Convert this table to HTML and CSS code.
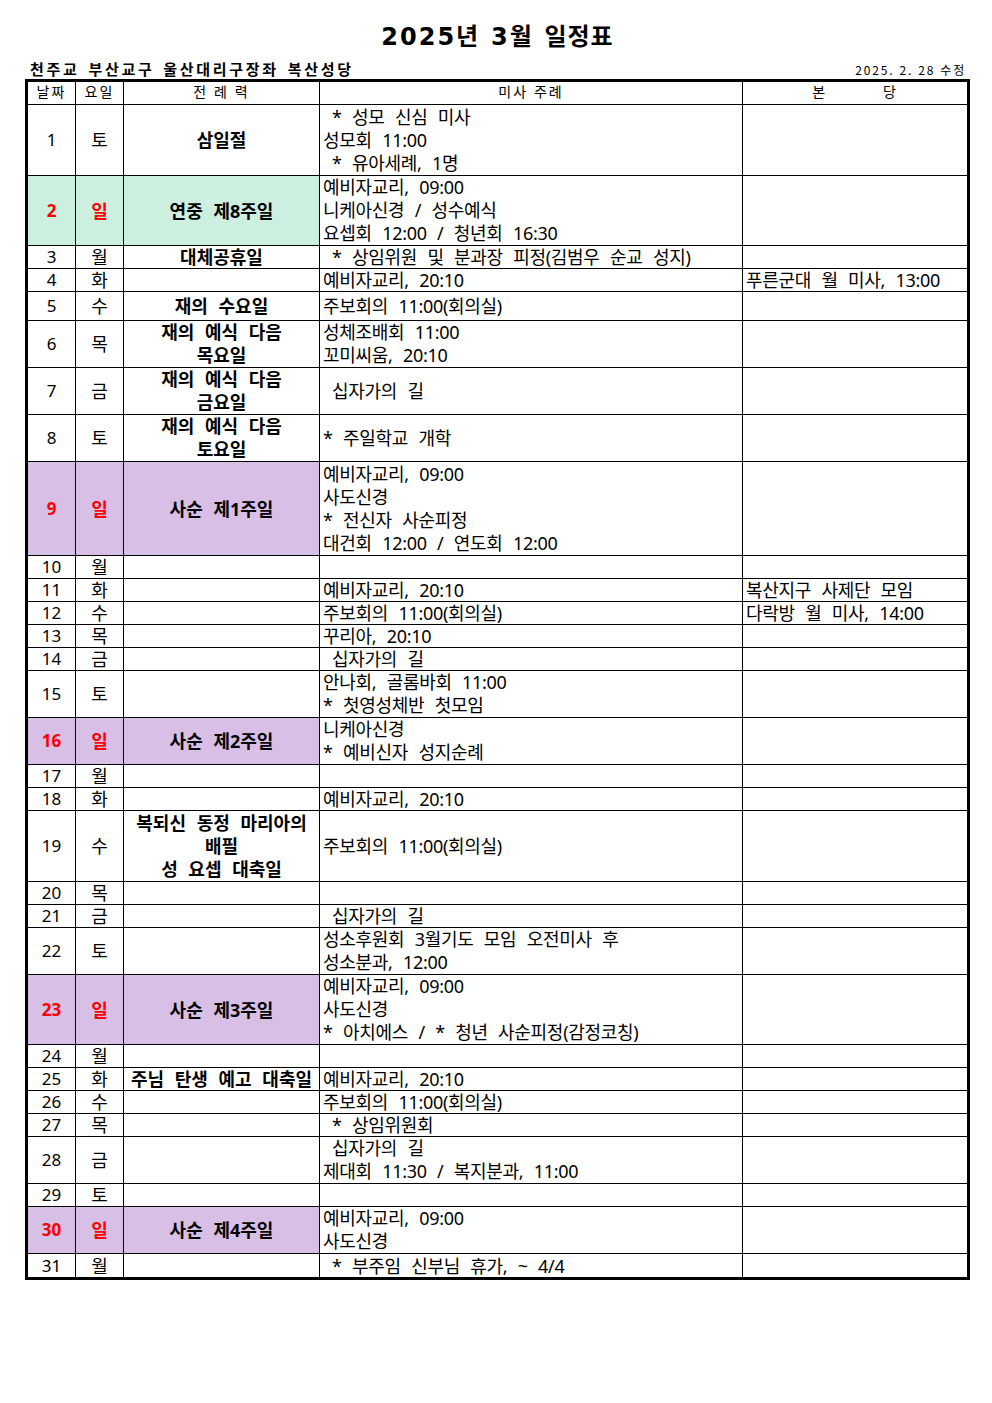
FILE: index.html
```html
<!DOCTYPE html>
<html lang="ko">
<head>
<meta charset="utf-8">
<title>2025년 3월 일정표</title>
<link rel="stylesheet" href="styles.css">
</head>
<body>
<div class="page">
  <h1 class="title"><span class="num">2025</span>년 <span class="num">3</span>월 일정표</h1>
  <div class="subhead">
    <span class="parish">천주교 부산교구 울산대리구장좌 복산성당</span>
    <span class="revised">2025. 2. 28 수정</span>
  </div>
  <table class="sched">
    <colgroup>
      <col class="w-date"><col class="w-day"><col class="w-lit"><col class="w-mass"><col class="w-par">
    </colgroup>
    <thead>
      <tr class="head">
        <th>날짜</th><th>요일</th><th class="sp">전 례 력</th><th class="sp">미사 주례</th><th class="bd">본 당</th>
      </tr>
    </thead>
    <tbody>
      <tr class="h3"><td class="d">1</td><td class="w">토</td><td class="l">삼일절</td><td class="m ml"><span class="ind">* 성모 신심 미사</span><br>성모회 11:00<br><span class="ind">* 유아세례, 1명</span></td><td class="p"></td></tr>
      <tr class="h3b mint sun"><td class="d">2</td><td class="w">일</td><td class="l">연중 제8주일</td><td class="m ml">예비자교리, 09:00<br>니케아신경 / 성수예식<br>요셉회 12:00 / 청년회 16:30</td><td class="p"></td></tr>
      <tr><td class="d">3</td><td class="w">월</td><td class="l">대체공휴일</td><td class="m"><span class="ind">* 상임위원 및 분과장 피정(김범우 순교 성지)</span></td><td class="p"></td></tr>
      <tr><td class="d">4</td><td class="w">화</td><td class="l"></td><td class="m">예비자교리, 20:10</td><td class="p">푸른군대 월 미사, 13:00</td></tr>
      <tr class="h5"><td class="d">5</td><td class="w">수</td><td class="l">재의 수요일</td><td class="m">주보회의 11:00(회의실)</td><td class="p"></td></tr>
      <tr class="h2"><td class="d">6</td><td class="w">목</td><td class="l ml">재의 예식 다음<br>목요일</td><td class="m ml">성체조배회 11:00<br>꼬미씨움, 20:10</td><td class="p"></td></tr>
      <tr class="h2"><td class="d">7</td><td class="w">금</td><td class="l ml">재의 예식 다음<br>금요일</td><td class="m"><span class="ind">십자가의 길</span></td><td class="p"></td></tr>
      <tr class="h2"><td class="d">8</td><td class="w">토</td><td class="l ml">재의 예식 다음<br>토요일</td><td class="m">* 주일학교 개학</td><td class="p"></td></tr>
      <tr class="h4 lav sun"><td class="d">9</td><td class="w">일</td><td class="l">사순 제1주일</td><td class="m ml">예비자교리, 09:00<br>사도신경<br>* 전신자 사순피정<br>대건회 12:00 / 연도회 12:00</td><td class="p"></td></tr>
      <tr><td class="d">10</td><td class="w">월</td><td class="l"></td><td class="m"></td><td class="p"></td></tr>
      <tr><td class="d">11</td><td class="w">화</td><td class="l"></td><td class="m">예비자교리, 20:10</td><td class="p">복산지구 사제단 모임</td></tr>
      <tr><td class="d">12</td><td class="w">수</td><td class="l"></td><td class="m">주보회의 11:00(회의실)</td><td class="p">다락방 월 미사, 14:00</td></tr>
      <tr><td class="d">13</td><td class="w">목</td><td class="l"></td><td class="m">꾸리아, 20:10</td><td class="p"></td></tr>
      <tr><td class="d">14</td><td class="w">금</td><td class="l"></td><td class="m"><span class="ind">십자가의 길</span></td><td class="p"></td></tr>
      <tr class="h2"><td class="d">15</td><td class="w">토</td><td class="l"></td><td class="m ml">안나회, 골롬바회 11:00<br>* 첫영성체반 첫모임</td><td class="p"></td></tr>
      <tr class="h2 lav sun"><td class="d">16</td><td class="w">일</td><td class="l">사순 제2주일</td><td class="m ml">니케아신경<br>* 예비신자 성지순례</td><td class="p"></td></tr>
      <tr><td class="d">17</td><td class="w">월</td><td class="l"></td><td class="m"></td><td class="p"></td></tr>
      <tr><td class="d">18</td><td class="w">화</td><td class="l"></td><td class="m">예비자교리, 20:10</td><td class="p"></td></tr>
      <tr class="h3"><td class="d">19</td><td class="w">수</td><td class="l ml">복되신 동정 마리아의<br>배필<br>성 요셉 대축일</td><td class="m">주보회의 11:00(회의실)</td><td class="p"></td></tr>
      <tr><td class="d">20</td><td class="w">목</td><td class="l"></td><td class="m"></td><td class="p"></td></tr>
      <tr><td class="d">21</td><td class="w">금</td><td class="l"></td><td class="m"><span class="ind">십자가의 길</span></td><td class="p"></td></tr>
      <tr class="h2"><td class="d">22</td><td class="w">토</td><td class="l"></td><td class="m ml">성소후원회 3월기도 모임 오전미사 후<br>성소분과, 12:00</td><td class="p"></td></tr>
      <tr class="h3b lav sun"><td class="d">23</td><td class="w">일</td><td class="l">사순 제3주일</td><td class="m ml">예비자교리, 09:00<br>사도신경<br>* 아치에스 / * 청년 사순피정(감정코칭)</td><td class="p"></td></tr>
      <tr><td class="d">24</td><td class="w">월</td><td class="l"></td><td class="m"></td><td class="p"></td></tr>
      <tr><td class="d">25</td><td class="w">화</td><td class="l">주님 탄생 예고 대축일</td><td class="m">예비자교리, 20:10</td><td class="p"></td></tr>
      <tr><td class="d">26</td><td class="w">수</td><td class="l"></td><td class="m">주보회의 11:00(회의실)</td><td class="p"></td></tr>
      <tr><td class="d">27</td><td class="w">목</td><td class="l"></td><td class="m"><span class="ind">* 상임위원회</span></td><td class="p"></td></tr>
      <tr class="h2"><td class="d">28</td><td class="w">금</td><td class="l"></td><td class="m ml"><span class="ind">십자가의 길</span><br>제대회 11:30 / 복지분과, 11:00</td><td class="p"></td></tr>
      <tr><td class="d">29</td><td class="w">토</td><td class="l"></td><td class="m"></td><td class="p"></td></tr>
      <tr class="h2 lav sun"><td class="d">30</td><td class="w">일</td><td class="l">사순 제4주일</td><td class="m ml">예비자교리, 09:00<br>사도신경</td><td class="p"></td></tr>
      <tr class="last"><td class="d">31</td><td class="w">월</td><td class="l"></td><td class="m"><span class="ind">* 부주임 신부님 휴가, ~ 4/4</span></td><td class="p"></td></tr>
    </tbody>
  </table>
</div>
</body>
</html>
```

FILE: styles.css
```css
html, body {
  margin: 0;
  padding: 0;
  background: #fff;
}
body {
  font-family: "Noto Sans", "Noto Sans CJK KR", sans-serif;
  color: #000;
}
.page {
  width: 945px;
  padding: 0 0 0 25px;
}
.title {
  margin: 0;
  padding-top: 19px;
  height: 36px;
  line-height: 32px;
  font-family: "Noto Sans CJK KR", sans-serif;
  font-size: 24px;
  font-weight: 700;
  text-align: center;
  letter-spacing: 1px;
  word-spacing: 4px;
}
.title .num {
  letter-spacing: 2px;
  font-family: "DejaVu Sans", sans-serif;
  font-weight: 700;
  font-size: 24px;
}
.subhead {
  display: flex;
  justify-content: space-between;
  align-items: flex-end;
  height: 24px;
  padding: 0 4px 0 5px;
}
.parish {
  font-family: "Noto Sans CJK KR", sans-serif;
  font-size: 15px;
  font-weight: 700;
  letter-spacing: 2.7px;
  word-spacing: 2px;
  line-height: 20px;
}
.revised {
  font-family: "Noto Sans CJK KR", sans-serif;
  font-size: 12px;
  letter-spacing: 1.8px;
  line-height: 18px;
}
.sched {
  border-collapse: separate;
  border-spacing: 0;
  table-layout: fixed;
  width: 945px;
  border: 3px solid #000;
}
.w-date { width: 48px; }
.w-day { width: 48px; }
.w-lit { width: 196px; }
.w-mass { width: 423px; }
.w-par { width: 224px; }
.sched th, .sched td {
  box-sizing: border-box;
  border-right: 1px solid #000;
  border-bottom: 1px solid #000;
  padding: 0;
  vertical-align: middle;
  overflow: hidden;
  white-space: nowrap;
}
.sched th:last-child, .sched td:last-child {
  border-right: none;
}
.sched tr.last td {
  border-bottom: none;
}
.sched tr { height: 23px; }
.sched tr.h2 { height: 47px; }
.sched tr.h3 { height: 71px; }
.sched tr.h3b { height: 70px; }
.sched tr.h4 { height: 94px; }
.sched tr.h5 { height: 29px; }
.sched th {
  font-family: "Noto Sans CJK KR", sans-serif;
  font-size: 14px;
  font-weight: 400;
  line-height: 19px;
  letter-spacing: 2px;
  text-align: center;
  vertical-align: top;
}
.sched th.sp { letter-spacing: 2px; }
.sched th.bd { word-spacing: 50px; }
.sched td {
  font-size: 18px;
  line-height: 22px;
  word-spacing: 6px;
}
.sched td.ml { line-height: 23px; }
.d, .w {
  text-align: center;
}
.d {
  font-size: 17px !important;
}
.l {
  text-align: center;
  font-weight: 700;
}
.m, .p {
  text-align: left;
  letter-spacing: -0.3px;
  padding-left: 3px !important;
}
.ind {
  padding-left: 9px;
}
.sun .d, .sun .w {
  color: #ff0000;
  font-weight: 700;
}
.mint .d, .mint .w, .mint .l {
  background: #cdefdf;
}
.lav .d, .lav .w, .lav .l {
  background: #d8bfe5;
}
```
